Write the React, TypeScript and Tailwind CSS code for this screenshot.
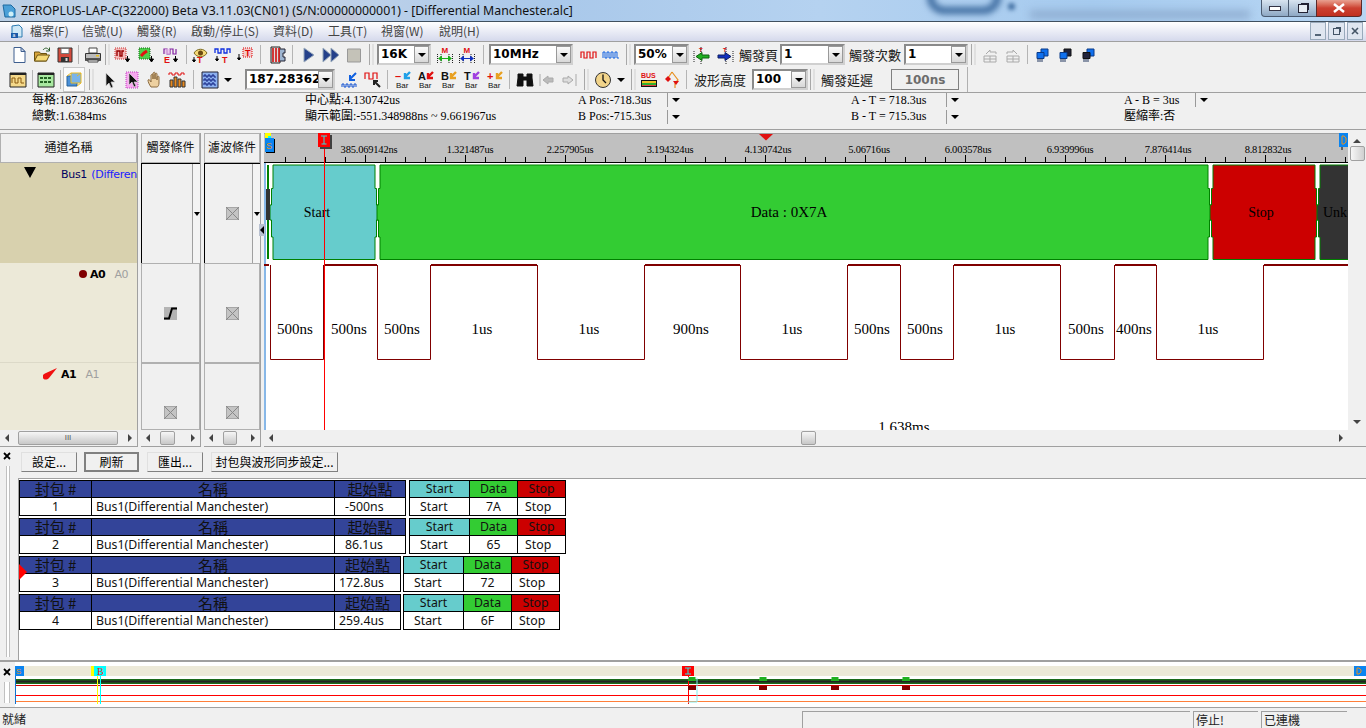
import React from "react";

const cjk = "[font-family:'Noto_Sans_CJK_TC','Liberation_Sans',sans-serif]";
const serif = "[font-family:'Liberation_Serif','Noto_Sans_CJK_TC',serif]";

const S = ({ children }: { children: React.ReactNode }) => (
  <svg width={18} height={18} viewBox="0 0 18 18">{children}</svg>
);
const Dn = () => <path d="M13.5 10v5M11.5 13l2 3 2-3z" stroke="#000" fill="#000" strokeWidth={1} />;

const Icons: Record<string, React.ReactNode> = {
  new: <><path d="M4 1.5h7l4 4v11H4z" fill="#fff" stroke="#3f5f8f" /><path d="M11 1.5v4h4z" fill="#cdd8ea" stroke="#3f5f8f" /></>,
  open: <><path d="M1.5 15V6h5l1 1.5h6V15z" fill="#d9a53c" stroke="#6b5210" /><path d="M1.5 15l3-6h12l-3 6z" fill="#f5d976" stroke="#6b5210" /><path d="M10 4c2-2.5 4-2.5 6 0M16.5 1.5V5H13" fill="none" stroke="#2f5f2f" /></>,
  save: <><path d="M2 2h14v14H2z" fill="#d24a3c" stroke="#333" /><path d="M5 2.5h8v5H5z" fill="#fff" stroke="#777" /><path d="M5 11h8v5H5z" fill="#333" /><path d="M9.5 12h2v3h-2z" fill="#ddd" /></>,
  print: <><path d="M5 2h8v5H5z" fill="#fff" stroke="#444" /><path d="M1.5 7.5h15v7h-15z" fill="#bbb" stroke="#333" /><path d="M1.5 12h15v3h-15z" fill="#555" /><path d="M12 9h3v1.5h-3z" fill="#e8c020" /><path d="M4 14h10v2H4z" fill="#fff" stroke="#444" /></>,
  sRed: <><path d="M1 2h11v11H1z" fill="#f2b8b8" stroke="#c33" strokeDasharray="1 1" /><path d="M3 10V5h3v5h2V5h2" fill="none" stroke="#900" strokeWidth={1.4} /><Dn /></>,
  sGreen: <><path d="M1 2h11v11H1z" fill="#4cd04c" stroke="#161" strokeDasharray="1 1" /><path d="M3 10l3-3 3-2" stroke="#e01010" strokeWidth={3} fill="none" /><Dn /></>,
  sE: <><path d="M2 8V3h3v5h3V3h3v5h3V3" fill="none" stroke="#8020a0" strokeWidth={1.2} /><path d="M3 3h5v5H3z" fill="#e5b8e8" opacity={0.7} /><text x={2} y={17} fontSize={9} fontWeight={700} fill="#e01010" fontFamily="Liberation Sans">E</text><Dn /></>,
  eye: <><path d="M2 7c3-5 10-5 13 0-3 5-10 5-13 0z" fill="#f5d976" stroke="#7a6a20" /><circle cx={8.5} cy={7} r={2.5} fill="#6b4a10" /><text x={5} y={17} fontSize={9} fontWeight={700} fill="#e01010" fontFamily="Liberation Sans">T</text><path d="M2 11v5M0.5 14l1.5 2 1.5-2z" stroke="#000" fill="#000" /></>,
  waveT: <><path d="M1 7V3h3v4h3V3h3v4h3V3h3v4" fill="none" stroke="#1030e0" strokeWidth={1.3} /><text x={8} y={17} fontSize={9} fontWeight={700} fill="#e01010" fontFamily="Liberation Sans">T</text><path d="M3 10v5M1.5 13l1.5 2 1.5-2z" stroke="#000" fill="#000" /></>,
  boxT: <><path d="M7 2h9v9H7z" fill="#f4c8c8" stroke="#d00" strokeDasharray="1 1" /><text x={9} y={10} fontSize={9} fontWeight={700} fill="#d00" fontFamily="Liberation Sans">T</text><path d="M3 8v6M1.5 12l1.5 2 1.5-2z" stroke="#000" fill="#000" /></>,
  ladder: <><path d="M3 1h9v16H3z" fill="#ddd" stroke="#222" /><path d="M5 2v14M8 2v14M11 2v14" stroke="#d01010" strokeWidth={1.6} /><path d="M12 3h5v4h-2v4h2v4h-5" fill="#9db4d0" stroke="#223" /></>,
  play: <path d="M5 2l10 7-10 7z" fill="#24408a" stroke="#9ab" />,
  play2: <><path d="M1 2l8 7-8 7z" fill="#24408a" stroke="#9ab" /><path d="M9 2l8 7-8 7z" fill="#24408a" stroke="#9ab" /></>,
  stop: <path d="M2.5 3h13v13h-13z" fill="#c4c2b8" stroke="#999" />,
  mGreen: <><text x={5.5} y={7} fontSize={8} fontWeight={700} fill="#e01010" fontFamily="Liberation Sans">M</text><path d="M1.5 8v9M16.5 8v9M5 8v9M13 8v9" stroke="#222" strokeDasharray="1 1" /><path d="M2 12.5l4-3v6zM16 12.5l-4-3v6z" fill="#18b018" /><path d="M6 12.5h6" stroke="#18b018" /></>,
  mBlue: <><text x={5.5} y={7} fontSize={8} fontWeight={700} fill="#e01010" fontFamily="Liberation Sans">M</text><path d="M1.5 8v9M16.5 8v9M5 8v9M13 8v9" stroke="#222" strokeDasharray="1 1" /><path d="M2 12.5l4-3v6zM16 12.5l-4-3v6z" fill="#1030c0" /><path d="M6 12.5h6" stroke="#1030c0" /></>,
  wRed: <path d="M1 12V6h3v6h3V6h3v6h3V6h3v6" fill="none" stroke="#e01010" strokeWidth={1.2} />,
  wBlue: <path d="M1 12V6h2v6h2V6h2v6h2V6h2v6h2V6h2v6h2" fill="none" stroke="#1060e0" strokeWidth={1} />,
  tLeft: <><text x={6} y={6} fontSize={6} fontWeight={700} fill="#e01010" fontFamily="Liberation Sans">T</text><path d="M8 1v17M1 5v11" stroke="#222" strokeDasharray="1 1" /><path d="M3 10.5l6-4v2.500h7v3H9v2.500z" fill="#20b020" stroke="#106010" /></>,
  tRight: <><text x={7} y={6} fontSize={6} fontWeight={700} fill="#e01010" fontFamily="Liberation Sans">T</text><path d="M10 1v17M17 5v11" stroke="#222" strokeDasharray="1 1" /><path d="M15 10.500l-6-4v2.500H2v3h7v2.500z" fill="#1030c0" stroke="#102060" /></>,
  pgL: <path d="M3 10h12v6H3zM9 10v6M3 13h12M5 8l4-4v2h6v2" fill="none" stroke="#aaa" />,
  pgR: <path d="M3 10h12v6H3zM9 10v6M3 13h12M13 8L9 4v2H3v2" fill="none" stroke="#aaa" />,
  pc1: <><path d="M8 3h7v7H8z" fill="#1070ee" stroke="#0a3a88" /><path d="M4 6.500h7v6H4z" fill="#1070ee" stroke="#0a3a88" /><path d="M4 13h6v3H4z" fill="#8a94a8" /></>,
  pc2: <><path d="M8 3h7v7H8z" fill="#22243c" stroke="#111" /><path d="M4 6.500h7v6H4z" fill="#1070ee" stroke="#0a3a88" /><path d="M4 13h6v3H4z" fill="#8a94a8" /></>,
  pc3: <><path d="M8 3h7v7H8z" fill="#1070ee" stroke="#0a3a88" /><path d="M4 6.500h7v6H4z" fill="#22243c" stroke="#111" /><path d="M4 13h6v3H4z" fill="#8a94a8" /></>,
  winY: <><path d="M1 2h16v14H1z" fill="#f5d98a" stroke="#222" /><path d="M1 2h16v2H1z" fill="#222" /><path d="M3 12V7h3v5h3V7h3v5h3" fill="none" stroke="#8a5a10" /></>,
  winG: <><path d="M1 2h16v14H1z" fill="#a8e8a0" stroke="#222" /><path d="M1 2h16v2H1z" fill="#222" /><path d="M3 6h3v2H3zM7 6h3v2H7zM11 6h3v2h-3zM3 10h3v2H3zM7 10h3v2H7zM11 10h3v2h-3z" fill="#226022" /></>,
  cube: <><path d="M2 5h10v10H2z" fill="#4a90d8" stroke="#24609a" /><path d="M6 2h10v10H6z" fill="#7ab4e8" stroke="#e8b820" /><path d="M2 5l4-3M12 5l4-3M12 15l4-3" stroke="#e8b820" /></>,
  arrow: <path d="M6 2v13l3-3 2 5 2-1-2-5h4z" fill="#111" stroke="#ccc" strokeWidth={0.8} />,
  selArrow: <><path d="M3 1h12v16H3z" fill="#f8a8f0" stroke="#c040c0" strokeDasharray="1 1" /><path d="M6 2v12l3-3 2 5 2-1-2-4h4z" fill="#111" stroke="#ddd" strokeWidth={0.7} /></>,
  hand: <path d="M5 16c-2-3-3-5-3-7 1-1 2 0 3 2V4c1-1 2-1 2 0v4-6c1-1 2-1 2 0v6-5c1-1 2-1 2 0v6-3c1-1 2-1 2 0v6c0 2-1 4-2 4z" fill="#edd0a0" stroke="#8a6a40" />,
  bars: <><path d="M1 4V2h3v2h3V2h3v2h3V2h3v2" fill="none" stroke="#e01010" /><path d="M2 16V9h3v7zM6 16V6h3v10zM10 16V8h3v8zM14 16v-6h3v6z" fill="#e88a20" stroke="#333" /></>,
  wPanel: <><path d="M1 1h16v16H1z" fill="#8cb0f0" stroke="#223" /><path d="M3 6V4h2v2h2V4h2v2h2V4h2v2h2M3 10V8h2v2h2V8h2v2h2V8h2v2h2M3 14v-2h2v2h2v-2h2v2h2v-2h2v2h2" fill="none" stroke="#102080" /></>,
  zoomB: <><path d="M15 2L9 8M9 4v5h5" fill="none" stroke="#1060e0" strokeWidth={2} /><path d="M1 16v-3h2v3h2v-3h2v3h2v-3h2v3h2v-3h2v3" fill="none" stroke="#1050d0" /></>,
  zoomR: <><path d="M1 8V2h4v6h4V2h4v6" fill="none" stroke="#e01010" strokeWidth={1.2} /><path d="M16 16l-6-6M10 14v-4h4" fill="none" stroke="#222" strokeWidth={2} /></>,
  bino: <path d="M2 3h5v3h4V3h5v4l1 8h-6V9H7v6H1l1-8z" fill="#111" stroke="#111" />,
  nav1: <path d="M2 3v12M5 9l5-4v2h5v4h-5v2z" fill="#bbb" stroke="#aaa" />,
  nav2: <path d="M16 3v12M13 9L8 5v2H3v4h5v2z" fill="#ddd" stroke="#aaa" />,
  clock: <><circle cx={9} cy={9} r={7.5} fill="#f2d48a" stroke="#333" /><path d="M9 3.500V9l3 3" fill="none" stroke="#111" strokeWidth={1.3} /></>,
  bus: <><text x={1} y={7} fontSize={7} fontWeight={700} fill="#e01010" fontFamily="Liberation Sans">BUS</text><path d="M1 9h16v7H1z" fill="#111" /><path d="M2 10h14v2H2z" fill="#f0c020" /><path d="M2 12h14v2H2z" fill="#30b030" /><path d="M2 14h14v1H2z" fill="#e04040" /></>,
  diam: <><path d="M9 1l3 4 3 4-3 3v5M9 1L5 7" fill="none" stroke="#e89020" strokeWidth={1.2} /><path d="M2 8l3-3 3 3-3 3z" fill="#e01010" /><path d="M10 10h6l-3 4z" fill="#e01010" /></>,
};

const barDefs: [string, string, string][] = [
  ["–", "#e01010", "#20a0e8"], ["A", "#111", "#e01010"], ["B", "#111", "#e8a020"], ["T", "#111", "#a040e0"], ["+", "#e01010", "#e8a020"],
];
const BarIcon = ({ i }: { i: number }) => {
  const [l, c, a] = barDefs[i];
  return (
    <S>
      <text x={1} y={9} fontSize={11} fontWeight={700} fill={c} fontFamily="Liberation Sans">{l}</text>
      <path d="M16 1l-5 5M11 2v5h5" fill="none" stroke={a} strokeWidth={2.4} />
      <text x={2} y={17} fontSize={8} fill="#111" fontFamily="Liberation Sans">Bar</text>
    </S>
  );
};

const Btn = ({ n, w = "w-[23px]", sel }: { n: string; w?: string; sel?: boolean }) => (
  <div className={`${w} flex h-full shrink-0 items-center justify-center ${sel ? "border border-[#c8c8c8] bg-[#fafafa]" : ""}`}>
    <S>{Icons[n]}</S>
  </div>
);
const Bar = ({ i, w = "w-[23px]" }: { i: number; w?: string }) => (
  <div className={`${w} flex h-full shrink-0 items-center justify-center`}><BarIcon i={i} /></div>
);
const Thin = ({ w }: { w: string }) => (
  <div className={`${w} flex h-full shrink-0 items-center justify-center`}><div className="h-[19px] w-px bg-[#b4b4b4]" /></div>
);
const Grip = ({ w }: { w: string }) => (
  <div className={`${w} flex h-full shrink-0 items-center justify-center gap-[2px]`}>
    <div className="h-[21px] w-px bg-[#a8a8a8]" /><div className="h-[21px] w-[2px] border-x border-[#e0e0e0] bg-white" />
  </div>
);
const Combo = ({ w, text, ml = "" }: { w: string; text: string; ml?: string }) => (
  <div className={`${w} ${ml} flex h-[21px] shrink-0 items-center border-2 border-t-[#8a8a8a] border-l-[#8a8a8a] border-b-[#d0d0d0] border-r-[#d0d0d0] bg-white`}>
    <div className="flex-1 overflow-hidden whitespace-nowrap pl-[2px] text-[12px] font-bold leading-[17px] text-black [font-family:'DejaVu_Sans',sans-serif]">{text}</div>
    <div className="flex h-full w-[15px] shrink-0 items-center justify-center border border-[#999] bg-gradient-to-b from-[#fbfbfb] to-[#d8d8d8]">
      <div className="h-0 w-0 border-x-[4px] border-t-[4px] border-x-transparent border-t-black" />
    </div>
  </div>
);
const Caret = () => <div className="h-0 w-0 border-x-[4px] border-t-[4px] border-x-transparent border-t-black" />;
const Label = ({ w, ml, text }: { w: string; ml: string; text: string }) => (
  <div className={`${w} ${ml} shrink-0 whitespace-nowrap text-[13px] leading-[18px] text-[#222] ${cjk}`}>{text}</div>
);

const InfoCell = ({ a, b, w = "w-[273px]" }: { a: string; b: string; w?: string }) => (
  <div className={`${w} flex shrink-0 flex-col justify-center gap-[1px] pb-[5px] text-[12px] leading-[15px] text-black ${serif}`}>
    <div className="flex h-[15px] items-center"><span className="whitespace-nowrap">{a}</span></div>
    <div className="flex h-[15px] items-center"><span className="whitespace-nowrap">{b}</span></div>
  </div>
);
const InfoDrop = ({ cls, two = true }: { cls: string; two?: boolean }) => (
  <div className={`${cls} flex shrink-0 flex-col justify-center gap-[3px] pb-[5px]`}>
    <div className="flex h-[14px] items-center gap-[4px]"><div className="h-[14px] w-px bg-[#999]" /><Caret /></div>
    {two ? <div className="flex h-[14px] items-center gap-[4px]"><div className="h-[14px] w-px bg-[#999]" /><Caret /></div> : <div className="h-[14px]" />}
  </div>
);

const XBox = () => (
  <svg width={13} height={13} viewBox="0 0 13 13">
    <path d="M0 0h13v13H0z" fill="#c4c4c4" />
    <path d="M0 0l13 13M13 0L0 13" stroke="#888" />
    <path d="M.5.500h12v12H.5z" fill="none" stroke="#888" strokeDasharray="1 1" />
  </svg>
);
const Edge = () => (
  <svg width={13} height={13} viewBox="0 0 13 13">
    <path d="M0 0h13v13H0z" fill="#b4b4b4" />
    <path d="M0 11.500h5L8 1.500h5" fill="none" stroke="#000" strokeWidth={2} />
  </svg>
);

const ArrowL = () => <div className="h-0 w-0 border-y-[4px] border-r-[4px] border-y-transparent border-r-[#444]" />;
const ArrowR = () => <div className="h-0 w-0 border-y-[4px] border-l-[4px] border-y-transparent border-l-[#444]" />;
const HScroll = ({ w, before, thumb, mark }: { w: string; before: string; thumb: string; mark?: boolean }) => (
  <div className={`${w} flex h-[16px] shrink-0 items-center bg-[#f0f0f0]`}>
    <div className="flex w-[14px] shrink-0 items-center justify-center"><ArrowL /></div>
    <div className={before} />
    <div className={`${thumb} flex h-[14px] shrink-0 items-center justify-center rounded-[2px] border border-[#a0a0a0] bg-gradient-to-b from-[#f6f6f6] to-[#c8c8c8] text-[8px] leading-[12px] text-[#555] [font-family:'Liberation_Sans',sans-serif]`}>{mark ? "III" : ""}</div>
    <div className="flex-1" />
    <div className="flex w-[14px] shrink-0 items-center justify-center"><ArrowR /></div>
  </div>
);

const TrigCell = ({ h, children, drop, bus }: { h: string; children?: React.ReactNode; drop?: boolean; bus?: boolean }) => (
  <div className={`${h} relative flex w-full shrink-0 items-center justify-center bg-[#f0f0f0] ${bus ? "border-t border-l border-black" : "border border-[#b0b0b0]"}`}>
    {children}
    {drop && (
      <div className="absolute bottom-0 right-0 top-0 flex w-[8px] items-center justify-center border-l border-[#a0a0a0] bg-[#f4f4f4]">
        <div className="h-0 w-0 border-x-[3px] border-t-[4px] border-x-transparent border-t-black" />
      </div>
    )}
  </div>
);

const rulerLabels: [number, string][] = [
  [369, "385.069142ns"], [470, "1.321487us"], [570, "2.257905us"], [670, "3.194324us"], [768, "4.130742us"],
  [869, "5.06716us"], [968, "6.003578us"], [1070, "6.939996us"], [1168, "7.876414us"], [1268, "8.812832us"],
];
const ticks = Array.from({ length: 54 }, (_, i) => 285 + i * 20);

const busPts = (l: number, r: number) =>
  [
    [l, 165], [r, 165], [r, 188.5], [r + 1.5, 188.5], [r + 1.5, 205], [r + 3, 205], [r + 3, 220], [r + 1.5, 220], [r + 1.5, 237], [r, 237], [r, 259.5],
    [l, 259.5], [l, 237], [l - 1.5, 237], [l - 1.5, 220], [l - 3, 220], [l - 3, 205], [l - 1.5, 205], [l - 1.5, 188.5], [l, 188.5],
  ].map((p) => p.join(",")).join(" ");

const edges = [270, 323, 377, 430, 537, 644, 740, 847, 900, 953, 1060, 1114, 1156, 1263];
const widths: [number, string][] = [
  [295, "500ns"], [349, "500ns"], [402, "500ns"], [482, "1us"], [589, "1us"], [691, "900ns"], [792, "1us"], [872, "500ns"],
  [925, "500ns"], [1005, "1us"], [1086, "500ns"], [1134, "400ns"], [1208, "1us"],
];
const highs: [number, number][] = [[264, 269], [324, 377], [431, 537], [645, 740], [848, 900], [954, 1060], [1115, 1156], [1264, 1348]];

const Wave = () => {
  let d = "";
  edges.forEach((x, i) => {
    const toLow = i % 2 === 0;
    d += `M${x + 0.5} 265V359.5`;
    const next = edges[i + 1];
    if (toLow && next) d += `M${x + 0.5} 359.5H${next + 0.5}`;
  });
  return (
    <svg width={1084} height={297} viewBox="264 133 1084 297" className="block bg-white">
      <rect x={264} y={133} width={1084} height={29} fill="#c0c0c0" />
      <path d="M264 133.500H1348" stroke="#a0a0a0" />
      <path d="M264 162.500H1348" stroke="#000" />
      <path d={ticks.map((x) => `M${x + 0.5} ${(x - 365) % 100 === 0 ? 155 : 157}V162`).join("")} stroke="#000" />
      <g className={`text-[10.5px] tracking-[-0.2px] ${serif}`} fill="#000">
        {rulerLabels.map(([x, t]) => <text key={t} x={x} y={153} textAnchor="middle">{t}</text>)}
      </g>
      <path d="M759 134h14l-7 6.500z" fill="#e01010" />
      <path d="M265 163V430" stroke="#1070d0" />
      <polygon points={busPts(273, 375)} fill="#66cccc" stroke="#008000" />
      <polygon points={busPts(380, 1208)} fill="#33cc33" stroke="#008000" />
      <polygon points={busPts(1213, 1315)} fill="#cc0000" stroke="#008000" />
      <polygon points={busPts(1320, 1400)} fill="#333333" stroke="#008000" />
      <path d="M268 165V259" stroke="#008000" strokeWidth={2} />
      <path d="M266 189h4v31h-4z" fill="#333" />
      <g className={`text-[14px] ${serif}`} fill="#000" textAnchor="middle">
        <text x={317} y={217}>Start</text>
        <text x={1261} y={217}>Stop</text>
        <text x={1335} y={217}>Unk</text>
      </g>
      <g className={`text-[15px] ${serif}`} fill="#000" textAnchor="middle">
        <text x={789} y={217}>Data : 0X7A</text>
        {widths.map(([x, t], i) => <text key={i} x={x} y={334}>{t}</text>)}
        <text x={904} y={432}>1.638ms</text>
      </g>
      <path d={d} stroke="#800000" fill="none" />
      <path d={highs.map(([a, b]) => `M${a} 265H${b}`).join("")} stroke="#800000" strokeWidth={2} />
      <path d="M324.500 147V430" stroke="#ff0000" />
      <rect x={320} y={135} width={12} height={14} fill="#404040" />
      <rect x={318} y={133} width={12} height={14} fill="#ff0000" />
      <path d="M321 136h6M324 136v8M321.500 144h5" stroke="#30e0e0" strokeWidth={1} />
      <rect x={265} y={133} width={6} height={5} fill="#ffff00" />
      <rect x={268} y={136} width={3} height={3} fill="#00ffff" />
      <rect x={266} y={139} width={9} height={14} fill="#000" />
      <rect x={265} y={138} width={9} height={14} fill="#0a84f0" />
      <text x={266} y={149} fontSize={9} fill="#e89020" fontFamily="Liberation Sans">S</text>
      <rect x={1339} y={133} width={9} height={14} fill="#0a84f0" />
      <path d="M1342 136v8h2l2-2v-4l-2-2z" fill="none" stroke="#e89020" />
      <path d="M1342 147v3" stroke="#000" />
    </svg>
  );
};

const Cell = ({ children, cls = "" }: { children: React.ReactNode; cls?: string }) => (
  <div className={`flex items-center whitespace-nowrap leading-[16px] ${cls}`}>{children}</div>
);

const PacketLeft = ({ n, start, short }: { n: string; start: string; short?: boolean }) => (
  <div className={`${short ? "w-[382px] grid-cols-[72px_243px_65px]" : "w-[387px] grid-cols-[72px_243px_70px]"} grid h-[36px] shrink-0 grid-rows-[17px_17px] border border-black bg-white text-[12.3px] text-[#111] [font-family:'Noto_Sans',sans-serif]`}>
    <Cell cls={`justify-center border-b border-r border-black bg-[#334499] text-[15px] ${cjk}`}>封包 #</Cell>
    <Cell cls={`justify-center border-b border-r border-black bg-[#334499] text-[15px] ${cjk}`}>名稱</Cell>
    <Cell cls={`justify-center border-b border-black bg-[#334499] text-[15px] ${cjk}`}>起始點</Cell>
    <Cell cls="justify-center border-r border-black">{n}</Cell>
    <Cell cls="border-r border-black pl-[4px]">Bus1(Differential Manchester)</Cell>
    <Cell cls="pl-[4px]">{short ? start : <span className="pl-[6px]">{start}</span>}</Cell>
  </div>
);
const PacketRight = ({ data, short }: { data: string; short?: boolean }) => (
  <div className={`${short ? "ml-[2px]" : "ml-[3px]"} grid h-[36px] w-[157px] shrink-0 grid-cols-[60px_48px_47px] grid-rows-[17px_17px] border border-black bg-white text-[12.3px] text-[#111] [font-family:'Noto_Sans',sans-serif]`}>
    <Cell cls="justify-center border-b border-r border-black bg-[#66cccc]">Start</Cell>
    <Cell cls="justify-center border-b border-r border-black bg-[#33cc33]">Data</Cell>
    <Cell cls="justify-center border-b border-black bg-[#cc0000]">Stop</Cell>
    <Cell cls="border-r border-black pl-[10px]">Start</Cell>
    <Cell cls="justify-center border-r border-black">{data}</Cell>
    <Cell cls="pl-[7px]">Stop</Cell>
  </div>
);

const packets = [
  { n: "1", s: "-500ns", d: "7A" },
  { n: "2", s: "86.1us", d: "65" },
  { n: "3", s: "172.8us", d: "72", short: true },
  { n: "4", s: "259.4us", d: "6F", short: true },
];

const Overview = () => (
  <svg width={1351} height={45} viewBox="15 662 1351 45" className="block">
    <rect x={15} y={662} width={1351} height={45} fill="#fff" />
    <rect x={15} y={666} width={1351} height={10} fill="#ece9d8" />
    <rect x={15} y={679} width={1351} height={5} fill="#1a6a1a" />
    <rect x={15} y={680.500} width={1351} height={2} fill="#222" />
    <path d="M15 685.500H1366" stroke="#d00000" />
    <path d="M15 695.500H1366" stroke="#ff0000" />
    <path d="M15 701.500H1366" stroke="#ff7f3a" />
    <rect x={15} y={666} width={9} height={10} fill="#0a84f0" />
    <text x={16} y={674} fontSize={8} fill="#e89020" fontFamily="Liberation Sans">S</text>
    <rect x={91} y={666} width={8} height={10} fill="#ffff00" />
    <rect x={94} y={666} width={12} height={10} fill="#00ffff" />
    <text x={97} y={675} fontSize={10} fill="#ff2020" fontFamily="Liberation Serif">B</text>
    <path d="M15.500 676V704" stroke="#1070d0" />
    <path d="M97.500 676V704" stroke="#ffff00" />
    <path d="M100.500 676V704" stroke="#00ffff" />
    <rect x={682} y={666} width={12} height={10} fill="#ff0000" />
    <path d="M685 668h6M688 668v6M685 674h6" stroke="#30e0e0" />
    <path d="M688.500 676V704" stroke="#ff0000" />
    <path d="M688 678h9v24h-9" fill="none" stroke="#80f0f0" />
    {[692, 763, 835, 906].map((x) => (
      <g key={x}>
        <path d={`M${x - 4} 677h8v4h-8z`} fill="#20b020" />
        <path d={`M${x - 4} 677v2M${x + 4} 677v2`} stroke="#fff" />
      </g>
    ))}
    {[692, 763, 835, 906].map((x) => <rect key={x} x={x - 4} y={686} width={8} height={4} fill="#800000" />)}
    <rect x={1354} y={666} width={12} height={10} fill="#0a84f0" />
    <path d="M1357 668v6h2l2-2v-2l-2-2z" fill="none" stroke="#e89020" />
  </svg>
);

const CloseX = () => (
  <svg width={8} height={8} viewBox="0 0 8 8"><path d="M1 1l6 6M7 1L1 7" stroke="#000" strokeWidth={1.8} /></svg>
);

export default function App() {
  return (
    <div className={`relative h-[728px] w-[1366px] overflow-hidden bg-[#f0f0f0] text-black ${cjk}`}>
      {/* Title bar */}
      <div className="relative flex h-[21px] items-center overflow-hidden bg-[linear-gradient(90deg,#b9cfe6_0%,#c9d6e8_18%,#a9c8ea_40%,#b5d2f0_60%,#a6cbef_80%,#b8d6f3_100%)]">
        <div className="absolute left-[927px] top-[-20px] h-[34px] w-[74px] rounded-full border-[7px] border-[#3c6a9e] blur-[3px]" />
        <div className="absolute left-[1008px] top-[3px] h-[7px] w-[7px] rounded-full bg-[#3c6a9e] blur-[2px]" />
        <div className="absolute left-[1030px] top-[11px] h-[7px] w-[220px] bg-[#8aa8cc] blur-[4px]" />
        <div className="absolute left-[260px] top-[14px] h-[8px] w-[100px] bg-[#c8a8a8] opacity-40 blur-[4px]" />
        <div className="z-10 ml-[1px] flex h-[15px] w-[16px] shrink-0 items-center justify-center">
          <svg width={14} height={14} viewBox="0 0 14 14"><path d="M1 1h8l4 4v8H3z" fill="#4aa0d8" stroke="#1d6aa0" /><circle cx={9} cy={10} r={2.500} fill="#d0f0f8" /></svg>
        </div>
        <div className="z-10 ml-[4px] whitespace-nowrap text-[12.3px] leading-[17px] text-[#111] [font-family:'Noto_Sans',sans-serif]">
          ZEROPLUS-LAP-C(322000) Beta V3.11.03(CN01) (S/N:00000000001) - [Differential Manchester.alc]
        </div>
        <div className="z-10 ml-auto mr-[4px] flex h-[17px] self-start">
          <div className="flex w-[28px] items-center justify-center rounded-bl-[4px] border border-t-0 border-[#4a5a70] bg-gradient-to-b from-[#d8e4f0] to-[#8ea8c4]"><div className="h-[5px] w-[12px] border border-[#334] bg-white" /></div>
          <div className="flex w-[27px] items-center justify-center border-b border-[#4a5a70] bg-gradient-to-b from-[#d8e4f0] to-[#8ea8c4]"><div className="h-[9px] w-[10px] border border-[#223] bg-[#e8eef4] shadow-[2px_-2px_0_-1px_#223]" /></div>
          <div className="flex w-[46px] items-center justify-center rounded-br-[4px] border border-t-0 border-[#5a2a2a] bg-gradient-to-b from-[#e8a090] via-[#cc4030] to-[#c03020]">
            <svg width={12} height={10} viewBox="0 0 12 10"><path d="M1 1l10 8M11 1L1 9" stroke="#fff" strokeWidth={2.500} /></svg>
          </div>
        </div>
      </div>
      {/* Menu bar */}
      <div className="flex h-[21px] items-center border-t border-b border-t-[#40505f] border-b-[#a0a0a0] bg-gradient-to-b from-white to-[#d5d9ec] pb-[1px] text-[12px] leading-[16px] text-[#444]">
        <div className="ml-[8px] flex w-[16px] shrink-0 justify-center">
          <svg width={15} height={15} viewBox="0 0 15 15"><path d="M3 2l7-1 3 3v9H3z" fill="#cfe8f6" stroke="#2a7ab0" /><path d="M2 9h7v5H2z" fill="#1a5aa8" /><text x={3.500} y={13} fontSize={5} fill="#fff" fontFamily="Liberation Sans">a</text></svg>
        </div>
        <span className="ml-[6px] w-[52px] shrink-0">檔案(F)</span>
        <span className="w-[55px] shrink-0">信號(U)</span>
        <span className="w-[54px] shrink-0">觸發(R)</span>
        <span className="w-[82px] shrink-0">啟動/停止(S)</span>
        <span className="w-[55px] shrink-0">資料(D)</span>
        <span className="w-[53px] shrink-0">工具(T)</span>
        <span className="w-[58px] shrink-0">視窗(W)</span>
        <span className="w-[50px] shrink-0">說明(H)</span>
        <div className="ml-auto mr-[3px] flex gap-[2px]">
          <div className="flex h-[18px] w-[16px] items-end justify-center border border-[#9ab] bg-[#dfe6f0] pb-[3px]"><div className="h-[2px] w-[6px] bg-[#567]" /></div>
          <div className="flex h-[18px] w-[17px] items-center justify-center border border-[#9ab] bg-[#dfe6f0]"><div className="h-[7px] w-[7px] border border-[#456] shadow-[2px_-2px_0_-1px_#456]" /></div>
          <div className="flex h-[18px] w-[16px] items-center justify-center border border-[#9ab] bg-[#dfe6f0]"><svg width={8} height={8} viewBox="0 0 8 8"><path d="M1 1l6 6M7 1L1 7" stroke="#456" strokeWidth={1.6} /></svg></div>
        </div>
      </div>
      {/* Toolbar 1 */}
      <div className="flex h-[25px] items-center pl-[7px]">
        <Btn n="new" /><Btn n="open" /><Btn n="save" /><Thin w="w-[5px]" /><Btn n="print" />
        <Grip w="w-[7px]" />
        <Btn n="sRed" w="w-[24px]" /><Btn n="sGreen" w="w-[24px]" /><Btn n="sE" w="w-[24px]" />
        <Thin w="w-[7px]" />
        <Btn n="eye" w="w-[22px]" /><Btn n="waveT" w="w-[22px]" /><Btn n="boxT" w="w-[22px]" />
        <Thin w="w-[9px]" />
        <Btn n="ladder" />
        <Thin w="w-[8px]" />
        <Btn n="play" /><Btn n="play2" /><Btn n="stop" />
        <Grip w="w-[12px]" />
        <Combo w="w-[54px]" text="16K" />
        <div className="w-[3px] shrink-0" />
        <Btn n="mGreen" w="w-[22px]" /><Btn n="mBlue" w="w-[22px]" />
        <Thin w="w-[11px]" />
        <Combo w="w-[84px]" text="10MHz" />
        <div className="w-[5px] shrink-0" />
        <Btn n="wRed" w="w-[22px]" /><Btn n="wBlue" w="w-[22px]" />
        <Grip w="w-[12px]" />
        <Combo w="w-[55px]" text="50%" />
        <div className="w-[1px] shrink-0" />
        <Btn n="tLeft" /><Btn n="tRight" />
        <Label w="w-[39px]" ml="ml-[3px]" text="觸發頁" />
        <Combo w="w-[65px]" ml="ml-[2px]" text="1" />
        <Label w="w-[52px]" ml="ml-[4px]" text="觸發次數" />
        <Combo w="w-[64px]" ml="ml-[3px]" text="1" />
        <Grip w="w-[10px]" />
        <Btn n="pgL" /><Btn n="pgR" w="w-[24px]" />
        <Thin w="w-[5px]" />
        <Btn n="pc1" /><Btn n="pc2" /><Btn n="pc3" w="w-[24px]" />
      </div>
      {/* Toolbar 2 */}
      <div className="flex h-[25px] items-center pl-[7px]">
        <Btn n="winY" w="w-[22px]" /><Thin w="w-[6px]" /><Btn n="winG" w="w-[22px]" /><Thin w="w-[6px]" /><Btn n="cube" w="w-[22px]" sel />
        <Grip w="w-[13px]" />
        <Btn n="arrow" w="w-[22px]" /><Btn n="selArrow" /><Btn n="hand" /><Btn n="bars" w="w-[22px]" />
        <Thin w="w-[11px]" />
        <Btn n="wPanel" w="w-[22px]" />
        <div className="flex w-[14px] shrink-0 justify-center"><Caret /></div>
        <div className="w-[10px] shrink-0" />
        <Combo w="w-[90px]" text="187.283626ns" />
        <div className="w-[4px] shrink-0" />
        <Btn n="zoomB" w="w-[22px]" /><Btn n="zoomR" />
        <Thin w="w-[7px]" />
        <Bar i={0} /><Bar i={1} /><Bar i={2} /><Bar i={3} w="w-[24px]" /><Bar i={4} w="w-[22px]" />
        <Thin w="w-[7px]" />
        <Btn n="bino" /><Btn n="nav1" w="w-[22px]" /><Btn n="nav2" w="w-[22px]" />
        <Grip w="w-[12px]" />
        <Btn n="clock" w="w-[22px]" />
        <div className="flex w-[14px] shrink-0 justify-center"><Caret /></div>
        <Grip w="w-[10px]" />
        <Btn n="bus" w="w-[22px]" /><Btn n="diam" />
        <Thin w="w-[6px]" />
        <Label w="w-[51px]" ml="ml-[5px]" text="波形高度" />
        <Combo w="w-[56px]" ml="ml-[7px]" text="100" />
        <Grip w="w-[8px]" />
        <Label w="w-[51px]" ml="ml-[5px]" text="觸發延遲" />
        <div className="ml-[19px] flex h-[21px] w-[68px] shrink-0 items-center justify-center border border-[#808080] bg-[#f0f0f0] text-[12px] font-bold text-[#6d6d6d] [font-family:'DejaVu_Sans',sans-serif]">100ns</div>
        <div className="ml-[8px] h-[25px] w-px bg-[#b0b0b0]" />
      </div>
      {/* Info */}
      <div className="flex h-[38px] items-center border-t border-b border-[#a0a0a0] pl-[32px]">
        <InfoCell a="每格:187.283626ns" b="總數:1.6384ms" />
        <InfoCell a="中心點:4.130742us" b="顯示範圍:-551.348988ns ~ 9.661967us" />
        <InfoCell a="A Pos:-718.3us" b="B Pos:-715.3us" w="w-[89px]" />
        <InfoDrop cls="w-[184px]" />
        <InfoCell a="A - T = 718.3us" b="B - T = 715.3us" w="w-[95px]" />
        <InfoDrop cls="w-[178px]" />
        <InfoCell a="A - B = 3us" b="壓縮率:否" w="w-[71px]" />
        <InfoDrop cls="w-[30px]" two={false} />
      </div>
      {/* Main waveform panel */}
      <div className="mt-[3px] flex h-[314px] items-stretch gap-[3px]">
        <div className="flex w-[138px] shrink-0 flex-col border-b border-r border-[#a0a0a0]">
          <div className="flex h-[30px] shrink-0 items-center justify-center border border-[#b0b0b0] pb-[2px] text-[12px] leading-[16px] text-[#111]">通道名稱</div>
          <div className="flex h-[100px] shrink-0 items-start bg-[#d8d1ae] pl-[24px] pt-[4px]">
            <div className="h-0 w-0 border-x-[6px] border-t-[11px] border-x-transparent border-t-black" />
            <div className="ml-[25px] w-[76px] overflow-hidden whitespace-nowrap pt-[1px] text-[11px] leading-[14px] text-[#000060] [font-family:'DejaVu_Sans',sans-serif] tracking-[-0.3px]">Bus1 <span className="ml-[1px] text-[#2020ff]">(Differential Manchester)</span></div>
          </div>
          <div className="flex h-[100px] shrink-0 items-start border-b border-[#dcd9c8] bg-[#ece9d8] pl-[79px] pt-[5px]">
            <div className="mt-[2px] h-[8px] w-[8px] rounded-full bg-[#800000]" />
            <span className="ml-[3px] text-[11px] font-bold leading-[14px] [font-family:'DejaVu_Sans',sans-serif] tracking-[-0.4px]">A0</span>
            <span className="ml-[9px] text-[11px] leading-[14px] text-[#a0a0a0] [font-family:'DejaVu_Sans',sans-serif] tracking-[-0.4px]">A0</span>
          </div>
          <div className="flex h-[67px] shrink-0 items-start bg-[#ece9d8] pl-[43px] pt-[5px]">
            <svg width={14} height={12} viewBox="0 0 14 12"><path d="M14 0L6 10c-2 2-5 2-6 0s0-4 3-5z" fill="#f01010" /></svg>
            <span className="ml-[4px] text-[11px] font-bold leading-[14px] [font-family:'DejaVu_Sans',sans-serif] tracking-[-0.4px]">A1</span>
            <span className="ml-[9px] text-[11px] leading-[14px] text-[#a0a0a0] [font-family:'DejaVu_Sans',sans-serif] tracking-[-0.4px]">A1</span>
          </div>
          <HScroll w="w-full" before="w-[4px]" thumb="w-[100px]" mark />
        </div>
        <div className="flex w-[60px] shrink-0 flex-col border-b border-r border-[#a0a0a0]">
          <div className="flex h-[30px] shrink-0 items-center justify-center border border-[#b0b0b0] pb-[2px] text-[12px] leading-[16px] text-[#111]">觸發條件</div>
          <TrigCell h="h-[100px]" bus drop />
          <TrigCell h="h-[100px]"><Edge /></TrigCell>
          <TrigCell h="h-[67px]"><div className="mt-[32px]"><XBox /></div></TrigCell>
          <HScroll w="w-full" before="w-[5px]" thumb="w-[15px]" />
        </div>
        <div className="flex w-[57px] shrink-0 flex-col border-b border-r border-[#a0a0a0]">
          <div className="flex h-[30px] shrink-0 items-center justify-center border border-[#b0b0b0] pb-[2px] text-[12px] leading-[16px] text-[#111]">濾波條件</div>
          <TrigCell h="h-[100px]" bus drop><XBox /></TrigCell>
          <TrigCell h="h-[100px]"><XBox /></TrigCell>
          <TrigCell h="h-[67px]"><div className="mt-[32px]"><XBox /></div></TrigCell>
          <HScroll w="w-full" before="w-[5px]" thumb="w-[14px]" />
        </div>
        <div className="relative flex w-[1102px] shrink-0 flex-col border-b border-[#a0a0a0]">
          <div className="absolute left-[-5px] top-[91px] z-10 flex h-[12px] w-[6px] items-center justify-center bg-[#b8c0d0]">
            <div className="h-0 w-0 border-y-[4px] border-r-[4px] border-y-transparent border-r-black" />
          </div>
          <div className="flex h-[297px] shrink-0">
            <div className="h-[297px] w-[1084px] shrink-0 overflow-hidden"><Wave /></div>
            <div className="flex w-[18px] shrink-0 flex-col items-center bg-[#f0f0f0] pt-[6px]">
              <div className="h-0 w-0 border-x-[4px] border-b-[4px] border-x-transparent border-b-[#444]" />
              <div className="mt-[3px] h-[15px] w-[15px] rounded-[2px] border border-[#a0a0a0] bg-gradient-to-r from-[#f6f6f6] to-[#d0d0d0]" />
              <div className="flex-1" />
              <div className="mb-[6px] h-0 w-0 border-x-[4px] border-t-[4px] border-x-transparent border-t-[#444]" />
            </div>
          </div>
          <div className="flex">
            <HScroll w="w-[1084px]" before="w-[523px]" thumb="w-[15px]" />
            <div className="w-[18px] bg-[#f0f0f0]" />
          </div>
        </div>
      </div>
      {/* Report panel: left rail, button bar and packet tables */}
      <div className="flex h-[213px]">
        <div className="flex w-[18px] shrink-0 flex-col pt-[5px]">
          <div className="ml-[3px]"><CloseX /></div>
          <div className="ml-[6px] mt-[6px] mb-[3px] w-[4px] flex-1 border-x border-[#c0c0c0] bg-white" />
        </div>
        <div className="flex flex-1 flex-col">
          <div className="flex h-[31px] shrink-0 items-start pl-[3px] pt-[5px]">
            <button className="h-[20px] w-[56px] border border-b-[#808080] border-r-[#808080] border-l-[#e0e0e0] border-t-[#e0e0e0] bg-[#f0f0f0] text-[12px] leading-[16px]">設定...</button>
            <button className="ml-[7px] h-[20px] w-[55px] border-2 border-[#808080] bg-[#f0f0f0] text-[12px] leading-[14px]">刷新</button>
            <button className="ml-[8px] h-[20px] w-[56px] border border-b-[#808080] border-r-[#808080] border-l-[#e0e0e0] border-t-[#e0e0e0] bg-[#f0f0f0] text-[12px] leading-[16px]">匯出...</button>
            <button className="ml-[8px] h-[20px] w-[127px] border border-b-[#808080] border-r-[#808080] border-l-[#e0e0e0] border-t-[#e0e0e0] bg-[#f0f0f0] text-[12px] leading-[16px]">封包與波形同步設定...</button>
          </div>
          <div className="relative flex flex-1 flex-col gap-[2px] border-l border-t border-[#a0a0a0] bg-white pt-[1px]">
            {packets.map((p) => (
              <div key={p.n} className="flex">
                <PacketLeft n={p.n} start={p.s} short={p.short} />
                <PacketRight data={p.d} short={p.short} />
              </div>
            ))}
            <div className="absolute left-0 top-[85px] h-0 w-0 border-y-[8px] border-l-[8px] border-y-transparent border-l-[#ff0000]" />
          </div>
        </div>
      </div>
      {/* Overview */}
      <div className="flex h-[48px] border-t-2 border-b border-[#a0a0a0]">
        <div className="relative flex w-[15px] shrink-0 flex-col items-center gap-[6px] pt-[6px]">
          <div className="pr-[2px]"><CloseX /></div>
          <div className="mr-[2px] h-[21px] w-[6px] border-x border-[#c0c0c0] bg-white" />
        </div>
        <Overview />
      </div>
      {/* Status */}
      <div className="flex h-[20px] items-center pt-[1px] text-[12px] leading-[16px] text-[#222]">
        <span className="ml-[2px] w-[800px] shrink-0">就緒</span>
        <div className="h-[17px] w-[388px] shrink-0 self-end border-l border-t border-[#a0a0a0]" />
        <div className="ml-[3px] flex h-[17px] w-[65px] shrink-0 items-center self-end border-l border-t border-[#a0a0a0] pl-[2px]">停止!</div>
        <div className="ml-[3px] flex h-[17px] w-[86px] shrink-0 items-center self-end border-l border-t border-[#a0a0a0] pl-[2px]">已連機</div>
      </div>
    </div>
  );
}
